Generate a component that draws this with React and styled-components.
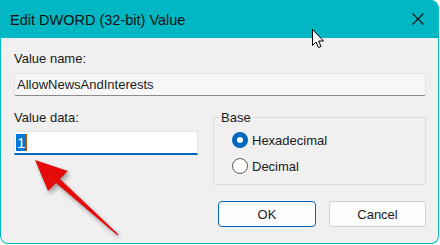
import React from "react";
import styled, { createGlobalStyle } from "styled-components";

const GlobalStyle = createGlobalStyle`
  body {
    margin: 0;
    background: #ffffff;
    font-family: "Liberation Sans", Arial, sans-serif;
  }
`;

const Stage = styled.div`
  position: relative;
  width: 440px;
  height: 245px;
  overflow: hidden;
`;

const Window = styled.div`
  width: 439px;
  height: 244px;
  box-sizing: border-box;
  border: 1px solid #00b7c3;
  border-top: 0;
  border-radius: 0 8px 8px 8px;
  overflow: hidden;
  background: #f0f0f0;
  display: flex;
  flex-direction: column;
`;

const TitleBar = styled.div`
  height: 38px;
  flex: none;
  background: #00b7c3;
  display: flex;
  align-items: center;
  justify-content: space-between;
  padding: 0 14px 0 9px;
`;

const Title = styled.span`
  font-size: 14.5px;
  color: #111;
  margin-top: 1px;
`;

const Body = styled.div`
  flex: 1;
  padding: 12px 12px 0 13px;
  display: flex;
  flex-direction: column;
`;

const Label = styled.div`
  font-size: 13px;
  line-height: 17px;
  color: #1a1a1a;
  margin-bottom: ${(p) => p.gap || 6}px;
`;

const NameField = styled.div`
  height: 23px;
  box-sizing: border-box;
  border: 1px solid #e3e3e3;
  border-bottom-color: #8b8b8b;
  border-radius: 2px;
  background: #f7f7f7;
  font-size: 13px;
  color: #1a1a1a;
  display: flex;
  align-items: center;
  padding-left: 2px;
`;

const Row = styled.div`
  display: grid;
  grid-template-columns: 184px 1fr;
  column-gap: 15px;
  margin-top: 13px;
`;

const DataField = styled.div`
  height: 24px;
  box-sizing: border-box;
  background: #ffffff;
  border: 1px solid #e5e5e5;
  border-bottom: 2px solid #0067c0;
  display: flex;
  align-items: center;
  padding-left: 1px;
  font-size: 15px;
`;

const Selected = styled.span`
  background: #0078d7;
  color: #ffffff;
  padding: 0 1px;
  line-height: 17px;
`;

const Caret = styled.span`
  width: 1px;
  height: 17px;
  background: #c05a00;
`;

const Group = styled.fieldset`
  margin: 1px 0 0 0;
  padding: 6px 0 9px 18px;
  border: 1px solid #dcdcdc;
  border-radius: 2px;
  display: flex;
  flex-direction: column;
  gap: 8px;
`;

const Legend = styled.legend`
  font-size: 13px;
  color: #1a1a1a;
  padding: 0 1px;
  margin-left: -12px;
`;

const Radio = styled.div`
  display: flex;
  align-items: center;
  gap: 4px;
  font-size: 13px;
  color: #1a1a1a;
  height: 18px;
`;

const Dot = styled.span`
  width: 16px;
  height: 16px;
  box-sizing: border-box;
  border-radius: 50%;
  border: ${(p) => (p.checked ? "5px solid #0067c0" : "1px solid #5a5a5a")};
  background: #ffffff;
`;

const Buttons = styled.div`
  display: flex;
  justify-content: flex-end;
  gap: 13px;
  margin-top: 16px;
`;

const Button = styled.button`
  width: ${(p) => p.w}px;
  height: 26px;
  box-sizing: border-box;
  border-radius: 4px;
  background: #fdfdfd;
  border: 1px solid ${(p) => (p.primary ? "#0067c0" : "#d0d0d0")};
  font-family: inherit;
  font-size: 13px;
  color: #1a1a1a;
`;

const Overlay = styled.svg`
  position: absolute;
  left: 0;
  top: 0;
  pointer-events: none;
`;

const Arrow = styled.polygon`
  fill: #e30b0b;
  filter: drop-shadow(2px 3px 2px rgba(0, 0, 0, 0.35));
`;

export default function App() {
  return (
    <>
      <GlobalStyle />
      <Stage>
        <Window>
          <TitleBar>
            <Title>Edit DWORD (32-bit) Value</Title>
            <svg width="12" height="12" viewBox="0 0 12 12">
              <path d="M0.5 0.5L11.5 11.5M11.5 0.5L0.5 11.5" stroke="#111" strokeWidth="1.1" />
            </svg>
          </TitleBar>
          <Body>
            <Label>Value name:</Label>
            <NameField>AllowNewsAndInterests</NameField>
            <Row>
              <div>
                <Label gap={5}>Value data:</Label>
                <DataField>
                  <Selected>1</Selected>
                  <Caret />
                </DataField>
              </div>
              <Group>
                <Legend>Base</Legend>
                <Radio>
                  <Dot checked />
                  Hexadecimal
                </Radio>
                <Radio>
                  <Dot />
                  Decimal
                </Radio>
              </Group>
            </Row>
            <Buttons>
              <Button primary w={98}>OK</Button>
              <Button w={97}>Cancel</Button>
            </Buttons>
          </Body>
        </Window>
        <Overlay width="440" height="245">
          <Arrow points="35,160 68,171 60,179 118.5,234.5 117.5,235.5 56,183 48,191" />
          <path
            d="M312.5 29.5 L312.5 45.5 L316 42 L318.5 47.5 L321 46.5 L318.6 41 L323.5 41 Z"
            fill="#ffffff"
            stroke="#000000"
            strokeWidth="1"
            strokeLinejoin="round"
          />
        </Overlay>
      </Stage>
    </>
  );
}
